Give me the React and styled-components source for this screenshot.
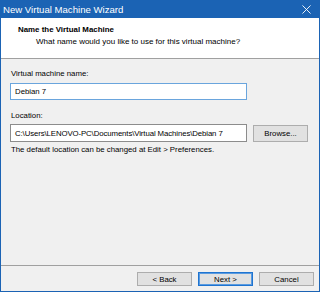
import React from "react";
import styled, { createGlobalStyle } from "styled-components";

const Global = createGlobalStyle`
  html, body { margin: 0; padding: 0; background: #f0f0f0; }
  * { box-sizing: border-box; }
`;

const Window = styled.div`
  width: 320px;
  height: 292px;
  border: 1px solid #1b63b4;
  border-top: none;
  display: flex;
  flex-direction: column;
  background: #f0f0f0;
  font-family: "Liberation Sans", Arial, sans-serif;
  font-size: 7.8px;
  color: #000;
  overflow: hidden;
`;

const TitleBar = styled.div`
  height: 18px;
  flex: none;
  background: #1b63b4;
  color: #fff;
  display: flex;
  align-items: center;
  justify-content: space-between;
  padding: 0 8px 0 2px;
  font-size: 9.6px;
`;

const Close = styled.svg`
  width: 9px;
  height: 9px;
`;

const Header = styled.div`
  height: 41px;
  flex: none;
  background: #fff;
  border-bottom: 1px solid #a0a0a0;
  padding: 7px 0 0 17px;
  display: flex;
  flex-direction: column;
`;

const HeaderTitle = styled.div`
  font-weight: bold;
  font-size: 7.9px;
  line-height: 10px;
`;

const HeaderSub = styled.div`
  padding-left: 18px;
  margin-top: 2px;
  line-height: 10px;
  font-size: 8px;
`;

const Body = styled.div`
  flex: 1;
  padding: 10px 0 0 9px;
  display: flex;
  flex-direction: column;
`;

const Label = styled.div`
  line-height: 10px;
  padding-left: 1px;
  margin-top: ${(p) => p.$mt || 0}px;
`;

const Row = styled.div`
  display: flex;
  align-items: center;
  gap: 6px;
  margin-top: ${(p) => p.$mt || 0}px;
`;

const Input = styled.div`
  width: 237px;
  height: ${(p) => p.$h || 17}px;
  background: #fff;
  border: 1px solid ${(p) => (p.$focused ? "#6aa5dd" : "#8c8c8c")};
  display: flex;
  align-items: center;
  padding-left: 4px;
  white-space: nowrap;
  overflow: hidden;
  letter-spacing: ${(p) => (p.$tight ? "-0.1px" : "0")};
`;

const Button = styled.div`
  width: ${(p) => p.$w || 55}px;
  height: ${(p) => p.$h || 14}px;
  background: #e1e1e1;
  border: 1px solid ${(p) => (p.$default ? "#1f74d0" : "#adadad")};
  box-shadow: ${(p) => (p.$default ? "inset 0 0 0 1px #5a9be0" : "none")};
  display: flex;
  align-items: center;
  justify-content: center;
`;

const Note = styled.div`
  line-height: 10px;
  margin-top: 3px;
  padding-left: 1px;
`;

const Footer = styled.div`
  height: 26px;
  flex: none;
  border-top: 1px solid #a0a0a0;
  display: flex;
  justify-content: flex-end;
  align-items: flex-start;
  padding: 6px 5px 0 0;
  gap: 6px;
`;

export default function App() {
  return (
    <>
      <Global />
      <Window>
        <TitleBar>
          <span>New Virtual Machine Wizard</span>
          <Close viewBox="0 0 10 10">
            <path d="M0.5 0.5 L9.5 9.5 M9.5 0.5 L0.5 9.5" stroke="#fff" strokeWidth="1" fill="none" />
          </Close>
        </TitleBar>
        <Header>
          <HeaderTitle>Name the Virtual Machine</HeaderTitle>
          <HeaderSub>What name would you like to use for this virtual machine?</HeaderSub>
        </Header>
        <Body>
          <Label>Virtual machine name:</Label>
          <Row $mt={4}>
            <Input $focused>Debian 7</Input>
          </Row>
          <Label $mt={11}>Location:</Label>
          <Row $mt={3}>
            <Input $h={18} $tight>C:\Users\LENOVO-PC\Documents\Virtual Machines\Debian 7</Input>
            <Button $w={55} $h={17}>Browse...</Button>
          </Row>
          <Note>The default location can be changed at Edit &gt; Preferences.</Note>
        </Body>
        <Footer>
          <Button>&lt; Back</Button>
          <Button $default>Next &gt;</Button>
          <Button>Cancel</Button>
        </Footer>
      </Window>
    </>
  );
}
